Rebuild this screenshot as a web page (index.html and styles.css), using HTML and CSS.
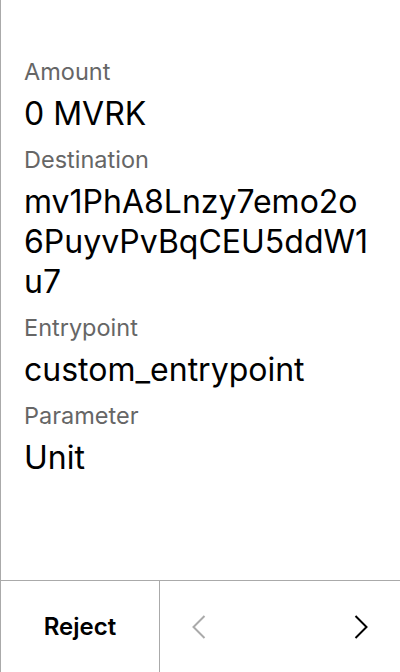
FILE: index.html
```html
<!DOCTYPE html>
<html>
<head>
<meta charset="utf-8">
<link rel="stylesheet" href="styles.css">
</head>
<body>
<div class="screen">
  <main class="content">
    <div class="field">
      <div class="label">Amount</div>
      <div class="value">0 MVRK</div>
    </div>
    <div class="field">
      <div class="label">Destination</div>
      <div class="value">mv1PhA8Lnzy7emo2o6PuyvPvBqCEU5ddW1u7</div>
    </div>
    <div class="field">
      <div class="label">Entrypoint</div>
      <div class="value">custom_entrypoint</div>
    </div>
    <div class="field">
      <div class="label">Parameter</div>
      <div class="value">Unit</div>
    </div>
  </main>
  <footer class="footer">
    <div class="reject">Reject</div>
    <div class="nav">
      <svg class="chev chev-off" width="14" height="24" viewBox="0 0 14 24"><path d="M12.5 1 L1.5 12 L12.5 23" fill="none" stroke="currentColor" stroke-width="2"/></svg>
      <svg class="chev" width="14" height="24" viewBox="0 0 14 24"><path d="M1.5 1 L12.5 12 L1.5 23" fill="none" stroke="currentColor" stroke-width="2"/></svg>
    </div>
  </footer>
</div>
</body>
</html>
```
FILE: styles.css
```css
* { box-sizing: border-box; }
html, body { margin: 0; padding: 0; background: #fff; }
body { font-family: Inter, "Noto Sans", sans-serif; color: #000; }
.screen {
  width: 400px;
  height: 672px;
  border-left: 1px solid #aaa;
  display: flex;
  flex-direction: column;
}
.content {
  flex: 1;
  padding: 50px 23px 0 23px;
  display: flex;
  flex-direction: column;
}
.field { display: flex; flex-direction: column; margin-bottom: 4px; }
.label {
  font-size: 23.5px;
  line-height: 44px;
  color: #666;
}
.value {
  font-size: 32px;
  line-height: 40px;
  word-break: break-all;
}
.footer {
  height: 92px;
  border-top: 1px solid #aaa;
  display: flex;
}
.reject {
  width: 159px;
  border-right: 1px solid #aaa;
  display: flex;
  align-items: center;
  justify-content: center;
  font-size: 24px;
  font-weight: 600;
}
.nav {
  flex: 1;
  display: flex;
  align-items: center;
  justify-content: space-between;
  padding: 0 32px;
}
.chev { color: #000; }
.chev-off { color: #aaa; }
```
